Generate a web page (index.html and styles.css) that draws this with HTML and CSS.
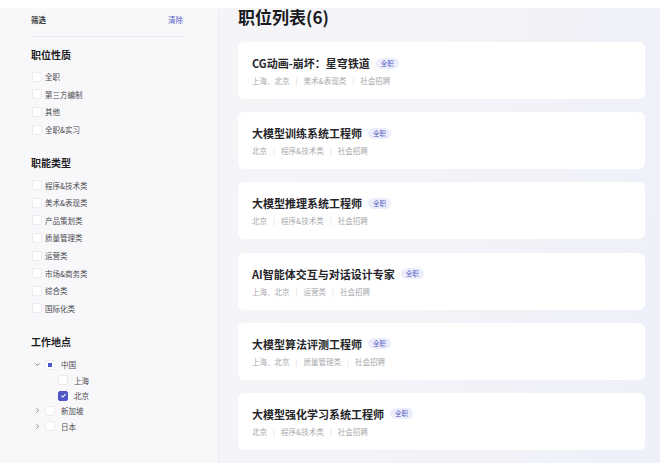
FILE: index.html
```html
<!DOCTYPE html>
<html lang="zh-CN">
<head>
    <meta charset="UTF-8">
    <meta name="viewport" content="width=device-width, initial-scale=1.0">
    <title>职位列表</title>
    <link rel="stylesheet" href="styles.css">
</head>
<body>
    <div class="topbar"></div>
    <div class="page">
        <aside class="sidebar">
            <div class="filter-head">
                <span>筛选</span>
                <a href="#" class="clear">清除</a>
            </div>

            <h3 class="group-title">职位性质</h3>
            <ul class="opts">
                <li><span class="box"></span>全职</li>
                <li><span class="box"></span>第三方编制</li>
                <li><span class="box"></span>其他</li>
                <li><span class="box"></span>全职&amp;实习</li>
            </ul>

            <h3 class="group-title">职能类型</h3>
            <ul class="opts">
                <li><span class="box"></span>程序&amp;技术类</li>
                <li><span class="box"></span>美术&amp;表现类</li>
                <li><span class="box"></span>产品策划类</li>
                <li><span class="box"></span>质量管理类</li>
                <li><span class="box"></span>运营类</li>
                <li><span class="box"></span>市场&amp;商务类</li>
                <li><span class="box"></span>综合类</li>
                <li><span class="box"></span>国际化类</li>
            </ul>

            <h3 class="group-title loc">工作地点</h3>
            <ul class="tree">
                <li>
                    <span class="arrow">
                        <svg width="7" height="7" viewBox="0 0 8 8"><path d="M1.5 2.8 L4 5.3 L6.5 2.8" fill="none" stroke="#777" stroke-width="1"/></svg>
                    </span>
                    <span class="box half"></span>中国
                </li>
                <li class="child"><span class="box"></span>上海</li>
                <li class="child">
                    <span class="box checked">
                        <svg width="7" height="7" viewBox="0 0 8 8"><path d="M1.6 4.2 L3.3 5.8 L6.4 2.4" fill="none" stroke="#fff" stroke-width="1.2"/></svg>
                    </span>北京
                </li>
                <li>
                    <span class="arrow">
                        <svg width="7" height="7" viewBox="0 0 8 8"><path d="M2.8 1.5 L5.3 4 L2.8 6.5" fill="none" stroke="#777" stroke-width="1"/></svg>
                    </span>
                    <span class="box"></span>新加坡
                </li>
                <li>
                    <span class="arrow">
                        <svg width="7" height="7" viewBox="0 0 8 8"><path d="M2.8 1.5 L5.3 4 L2.8 6.5" fill="none" stroke="#777" stroke-width="1"/></svg>
                    </span>
                    <span class="box"></span>日本
                </li>
            </ul>
        </aside>

        <main class="main">
            <h2 class="list-title">职位列表(6)</h2>

            <div class="job">
                <div class="job-name">CG动画-崩坏：星穹铁道<span class="tag">全职</span></div>
                <div class="job-meta">上海、北京<i>|</i>美术&amp;表现类<i>|</i>社会招聘</div>
            </div>
            <div class="job">
                <div class="job-name">大模型训练系统工程师<span class="tag">全职</span></div>
                <div class="job-meta">北京<i>|</i>程序&amp;技术类<i>|</i>社会招聘</div>
            </div>
            <div class="job">
                <div class="job-name">大模型推理系统工程师<span class="tag">全职</span></div>
                <div class="job-meta">北京<i>|</i>程序&amp;技术类<i>|</i>社会招聘</div>
            </div>
            <div class="job">
                <div class="job-name">AI智能体交互与对话设计专家<span class="tag">全职</span></div>
                <div class="job-meta">上海、北京<i>|</i>运营类<i>|</i>社会招聘</div>
            </div>
            <div class="job">
                <div class="job-name">大模型算法评测工程师<span class="tag">全职</span></div>
                <div class="job-meta">上海、北京<i>|</i>质量管理类<i>|</i>社会招聘</div>
            </div>
            <div class="job">
                <div class="job-name">大模型强化学习系统工程师<span class="tag">全职</span></div>
                <div class="job-meta">北京<i>|</i>程序&amp;技术类<i>|</i>社会招聘</div>
            </div>
        </main>
    </div>
</body>
</html>
```

FILE: styles.css
```css
body { margin: 0; font-family: "Noto Sans CJK SC", "Noto Sans", sans-serif; color: #222; background: #f4f5f9; overflow: hidden; }
ul { list-style: none; margin: 0; padding: 0; }
h2, h3 { margin: 0; }

.topbar { height: 8px; background: #fff; }
.page { display: flex; min-height: 455px; }

/* sidebar */
.sidebar { width: 152px; flex: none; padding: 0 35px 0 31px; background: #f8f8fa; border-right: 1px solid #efeff3; }
.filter-head { display: flex; justify-content: space-between; padding: 6px 0 10px; line-height: 12px; font-size: 7.5px; font-weight: 600; color: #333; border-bottom: 1px solid #e9e9ef; }
.clear { color: #5c63c9; text-decoration: none; font-weight: 400; }
.group-title { margin-top: 12px; font-size: 10px; line-height: 12px; font-weight: 700; color: #1d1d1f; }
.opts { margin-top: 7px; margin-bottom: 19px; }
.opts li { display: flex; align-items: center; height: 17.6px; font-size: 7.5px; color: #4a4a4f; }
.box { width: 8px; height: 8px; border: 1px solid #ebebf0; border-radius: 2px; background: #fff; margin: 0 3px 0 1px; flex: none; display: flex; align-items: center; justify-content: center; }
.box.half::after { content: ""; width: 4px; height: 4px; background: #4f57c9; }
.box.checked { background: #4f57c9; border-color: #4f57c9; }

.tree { margin-top: 9px; }
.tree li { display: flex; align-items: center; height: 15.4px; font-size: 7.5px; color: #4a4a4f; }
.tree .arrow { width: 9px; margin-left: 2px; display: flex; align-items: center; justify-content: center; }
.tree .box { margin: 0 6px 0 3px; }
.tree .child { padding-left: 25px; }
.tree .child .box { margin-left: 2px; }

/* list */
.main { flex: 1; padding: 0 15px 0 19px; background: linear-gradient(100deg, #f5f5f8 0%, #f2f3f8 60%, #eef0fa 100%); }
.list-title { font-size: 17px; line-height: 18px; font-weight: 700; color: #1b1b1f; margin-bottom: 16px; }
.job { background: #fff; border-radius: 6px; height: 57px; box-sizing: border-box; padding: 13px 14px 0; margin-bottom: 13.2px; }
.job-name { display: flex; align-items: center; font-size: 11px; line-height: 16px; font-weight: 600; color: #26262a; }
.tag { margin-left: 6px; font-size: 6.5px; line-height: 11px; padding: 0 5px; border-radius: 6px; background: #eceefb; color: #5b62c6; font-weight: 400; }
.job-meta { margin-top: 4px; font-size: 7.5px; line-height: 12px; color: #a8a8ad; }
.job-meta i { font-style: normal; color: #dadade; margin: 0 6px; }
```
